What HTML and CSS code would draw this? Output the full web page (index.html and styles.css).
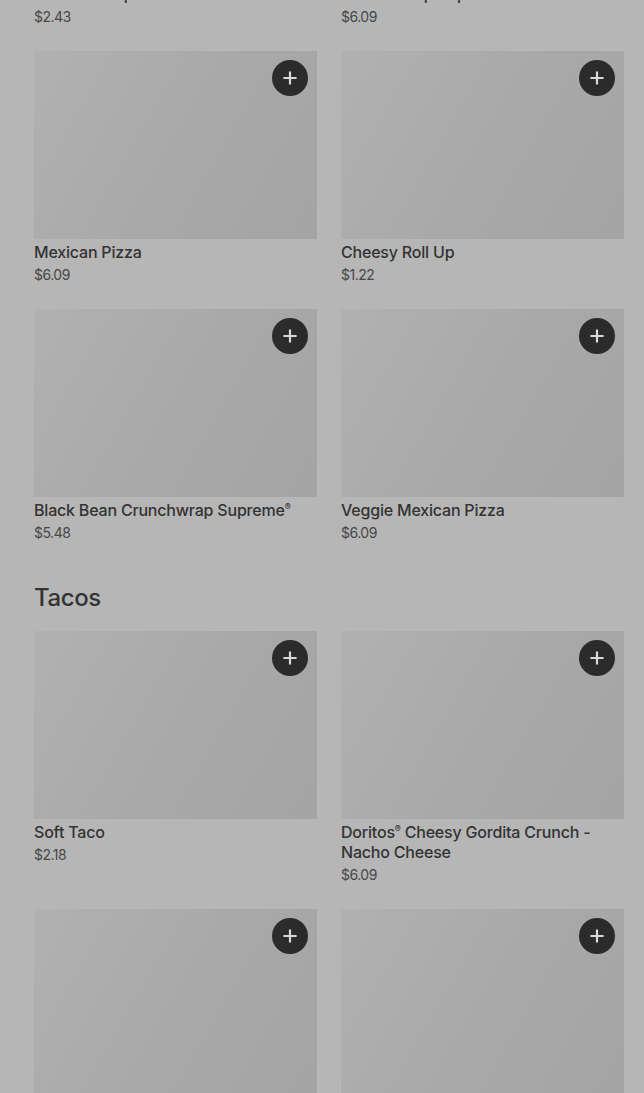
FILE: index.html
```html
<!DOCTYPE html>
<html lang="en">
<head>
<meta charset="utf-8">
<title>Menu</title>
<link rel="stylesheet" href="styles.css">
</head>
<body>
<main class="menu">
  <section class="section">
    <div class="grid">
      <div class="card"><div class="thumb"><button class="add"><svg viewBox="0 0 36 36" width="36" height="36"><path d="M18 12.5v11M12.5 18h11" stroke="#d9d9d9" stroke-width="2.2" stroke-linecap="square"/></svg></button></div><div class="name">Chicken Chipotle Melt</div><div class="price">$2.43</div></div>
      <div class="card"><div class="thumb"><button class="add"><svg viewBox="0 0 36 36" width="36" height="36"><path d="M18 12.5v11M12.5 18h11" stroke="#d9d9d9" stroke-width="2.2" stroke-linecap="square"/></svg></button></div><div class="name">Crunchwrap Supreme®</div><div class="price">$6.09</div></div>
      <div class="card"><div class="thumb"><button class="add"><svg viewBox="0 0 36 36" width="36" height="36"><path d="M18 12.5v11M12.5 18h11" stroke="#d9d9d9" stroke-width="2.2" stroke-linecap="square"/></svg></button></div><div class="name">Mexican Pizza</div><div class="price">$6.09</div></div>
      <div class="card"><div class="thumb"><button class="add"><svg viewBox="0 0 36 36" width="36" height="36"><path d="M18 12.5v11M12.5 18h11" stroke="#d9d9d9" stroke-width="2.2" stroke-linecap="square"/></svg></button></div><div class="name">Cheesy Roll Up</div><div class="price">$1.22</div></div>
      <div class="card"><div class="thumb"><button class="add"><svg viewBox="0 0 36 36" width="36" height="36"><path d="M18 12.5v11M12.5 18h11" stroke="#d9d9d9" stroke-width="2.2" stroke-linecap="square"/></svg></button></div><div class="name">Black Bean Crunchwrap Supreme<sup>®</sup></div><div class="price">$5.48</div></div>
      <div class="card"><div class="thumb"><button class="add"><svg viewBox="0 0 36 36" width="36" height="36"><path d="M18 12.5v11M12.5 18h11" stroke="#d9d9d9" stroke-width="2.2" stroke-linecap="square"/></svg></button></div><div class="name">Veggie Mexican Pizza</div><div class="price">$6.09</div></div>
    </div>
  </section>
  <section class="section">
    <h2 class="heading">Tacos</h2>
    <div class="grid">
      <div class="card"><div class="thumb"><button class="add"><svg viewBox="0 0 36 36" width="36" height="36"><path d="M18 12.5v11M12.5 18h11" stroke="#d9d9d9" stroke-width="2.2" stroke-linecap="square"/></svg></button></div><div class="name">Soft Taco</div><div class="price">$2.18</div></div>
      <div class="card"><div class="thumb"><button class="add"><svg viewBox="0 0 36 36" width="36" height="36"><path d="M18 12.5v11M12.5 18h11" stroke="#d9d9d9" stroke-width="2.2" stroke-linecap="square"/></svg></button></div><div class="name">Doritos<sup>®</sup> Cheesy Gordita Crunch - Nacho Cheese</div><div class="price">$6.09</div></div>
      <div class="card"><div class="thumb"><button class="add"><svg viewBox="0 0 36 36" width="36" height="36"><path d="M18 12.5v11M12.5 18h11" stroke="#d9d9d9" stroke-width="2.2" stroke-linecap="square"/></svg></button></div></div>
      <div class="card"><div class="thumb"><button class="add"><svg viewBox="0 0 36 36" width="36" height="36"><path d="M18 12.5v11M12.5 18h11" stroke="#d9d9d9" stroke-width="2.2" stroke-linecap="square"/></svg></button></div></div>
    </div>
  </section>
</main>
</body>
</html>
```
FILE: styles.css
```css
html, body {
  margin: 0;
  padding: 0;
  background: #b6b6b6;
  overflow: hidden;
}
body {
  font-family: Inter, "Liberation Sans", sans-serif;
  color: #333333;
}
.menu {
  margin-top: -207px;
  padding: 0 20px 0 34px;
}
.section + .section {
  margin-top: 40px;
}
.heading {
  margin: 0 0 17px;
  font-size: 24px;
  line-height: 32px;
  font-weight: 500;
  color: #333333;
  letter-spacing: -0.4px;
}
.grid {
  display: grid;
  grid-template-columns: 1fr 1fr;
  column-gap: 24px;
  row-gap: 25px;
}
.card {
  display: flex;
  flex-direction: column;
}
.thumb {
  position: relative;
  height: 188px;
  background: linear-gradient(120deg, #b1b1b1 0%, #a9a9a9 50%, #a4a4a4 100%);
}
.add {
  position: absolute;
  top: 9px;
  right: 9px;
  width: 36px;
  height: 36px;
  padding: 0;
  border: none;
  border-radius: 50%;
  background: #2b2b2b;
  display: flex;
  align-items: center;
  justify-content: center;
}
.add svg {
  display: block;
}
.name {
  margin-top: 3px;
  font-size: 16px;
  line-height: 20px;
  font-weight: 500;
  color: #333333;
  letter-spacing: -0.2px;
}
.name sup {
  font-size: 9px;
  line-height: 0;
  vertical-align: 6px;
}
.price {
  margin-top: 4px;
  font-size: 14px;
  line-height: 18px;
  color: #474747;
  letter-spacing: -0.5px;
}
```
